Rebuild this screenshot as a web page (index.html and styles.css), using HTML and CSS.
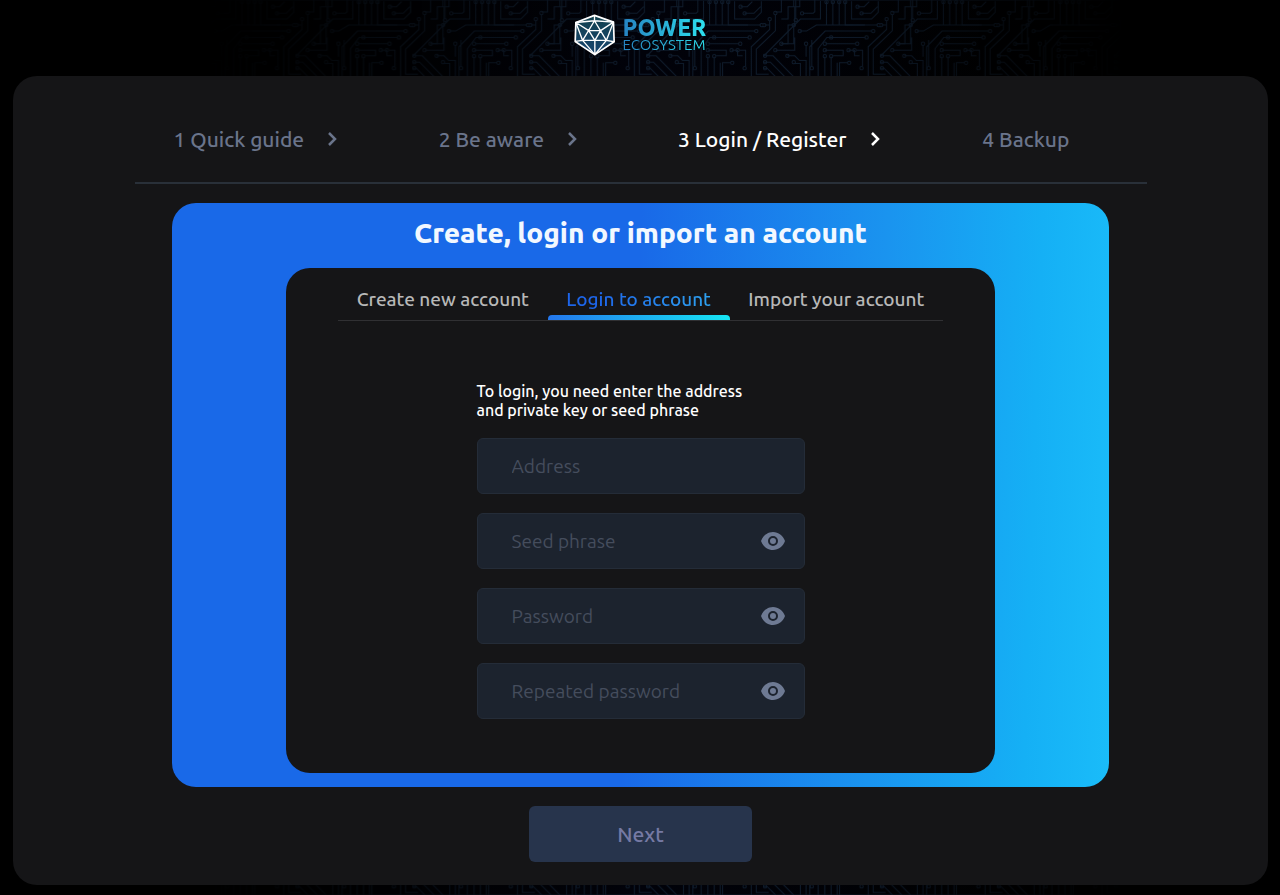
FILE: index.html
```html
<!DOCTYPE html>
<html lang="en">
<head>
<meta charset="utf-8">
<meta name="viewport" content="width=device-width, initial-scale=1">
<title>Power Ecosystem</title>
<link rel="stylesheet" href="styles.css">
</head>
<body>
<svg class="circuit" aria-hidden="true">
  <defs>
    <pattern id="tile" width="350" height="350" patternUnits="userSpaceOnUse" patternTransform="translate(763 0) scale(.334)">
      <g id="traces" fill="none" stroke-width="3">
        <path d="M5 75h15M98 57V0M120 40h30l5-5V0M172 2v55h-60L0 170M190 4v71M209 4v71M228 4v71M246 4v71h59M265 4v53h60l20-20V4M283 20h20l15-15M295 40h28l20-20"/>
        <path d="M110 93h20l30-18h184M140 230v-90l46-47h140M165 230v-84l26-34h115M188 131h90M185 150h55v17h-30M280 150h18v48M256 150h18v17h15M254 188h-25v42M0 167h30l62 63M0 186h22l44 44M0 204h12l26 26M38 150h57v-38M92 79v52h-37M129 135v35M146 200v-80M73 167h22l14 14h20v49M92 190h20v40M185 170v60M204 170v60M222 188v42"/>
        <path d="M20 62v26l-55 52v90M37 44v48l-57 55v75h37M55 131h20V75h20V20h15V0M37 36h18V0M55 57h20V20h17V0"/>
        <path d="M370 62v26l-55 52v90M387 44v48l-57 55v75h37M0 240h60l20 20h80l30-20h75l20 20h60M30 265h40l20 20v65M110 350v-55l30-30h90l20 20v65M170 340v-40h30v50M280 350v-60h40v-20M10 350v-45l20-20"/>
        <g>
          <circle cx="4" cy="75" r="5"/><circle cx="346" cy="75" r="5"/><circle cx="98" cy="60" r="5"/><circle cx="117" cy="40" r="5"/><circle cx="20" cy="57" r="5"/><circle cx="37" cy="39" r="5"/><circle cx="92" cy="75" r="5"/><circle cx="110" cy="93" r="5"/><circle cx="330" cy="93" r="5"/><circle cx="310" cy="112" r="5"/><circle cx="204" cy="112" r="5"/><circle cx="185" cy="131" r="5"/><circle cx="282" cy="131" r="5"/><circle cx="185" cy="150" r="5"/><circle cx="256" cy="150" r="5"/><circle cx="274" cy="150" r="5"/><circle cx="6" cy="167" r="5"/><circle cx="6" cy="186" r="5"/><circle cx="6" cy="204" r="5"/><circle cx="37" cy="150" r="5"/><circle cx="55" cy="131" r="5"/><circle cx="73" cy="167" r="5"/><circle cx="92" cy="186" r="5"/><circle cx="146" cy="204" r="5"/><circle cx="129" cy="131" r="5"/><circle cx="185" cy="168" r="5"/><circle cx="204" cy="168" r="5"/><circle cx="258" cy="188" r="5"/><circle cx="295" cy="204" r="5"/><circle cx="190" cy="6" r="5"/><circle cx="209" cy="6" r="5"/><circle cx="228" cy="6" r="5"/><circle cx="246" cy="6" r="5"/><circle cx="283" cy="20" r="5"/><circle cx="295" cy="40" r="5"/>
        </g>
      </g>
    </pattern>
  </defs>
  <rect width="100%" height="100%" fill="url(#tile)"/>
</svg>

<header class="header">
  <a class="logo" href="#">
    <svg class="logo-mark" viewBox="0 0 120 124" aria-hidden="true">
      <defs><linearGradient id="gem" x1="0" y1="0" x2="0" y2="1"><stop offset="0" stop-color="#12414e"/><stop offset="1" stop-color="#17456f"/></linearGradient></defs>
      <path d="M60 4 116 24 118 82 61 120 3 81 5 25Z" fill="url(#gem)"/>
      <g fill="none" stroke="#fff" stroke-linejoin="round">
        <path stroke-width="5" d="M60 4 116 24 118 82 61 120 3 81 5 25Z"/>
        <path stroke-width="4" d="M60 20 95 78H25ZM43 49H78L61 78ZM60 4V20M60 20 5 25 25 78 3 81M60 20 116 24 95 78 118 82M25 78 61 120 95 78M5 25 43 49M116 24 78 49M61 78V120"/>
      </g>
    </svg>
    <span class="logo-text"><strong>POWER</strong><span>ECOSYSTEM</span></span>
  </a>
</header>

<main class="panel">
  <nav class="steps" aria-label="Progress">
    <a href="#" class="step">1 Quick guide <svg class="chevron" viewBox="0 0 10 14"><path d="m2 1 6 6-6 6"/></svg></a>
    <a href="#" class="step">2 Be aware <svg class="chevron" viewBox="0 0 10 14"><path d="m2 1 6 6-6 6"/></svg></a>
    <a href="#" class="step current" aria-current="step">3 Login / Register <svg class="chevron" viewBox="0 0 10 14"><path d="m2 1 6 6-6 6"/></svg></a>
    <a href="#" class="step">4 Backup</a>
  </nav>

  <section class="card">
    <h1 class="title">Create, login or import an account</h1>
    <div class="card-body">
      <div class="tabs" role="tablist">
        <button class="tab" role="tab" type="button">Create new account</button>
        <button class="tab active" role="tab" type="button" aria-selected="true"><span>Login to account</span></button>
        <button class="tab" role="tab" type="button">Import your account</button>
      </div>
      <form class="form" id="login">
        <p class="hint">To login, you need enter the address<br>and private key or seed phrase</p>
        <div class="field"><input type="text" placeholder="Address" aria-label="Address"></div>
        <div class="field">
          <input type="password" placeholder="Seed phrase" aria-label="Seed phrase">
          <button class="eye" type="button" aria-label="Show seed phrase"><svg viewBox="0 0 24 18"><path fill-rule="evenodd" d="M12 0C6.500 0 2 3.700 0 9c2 5.300 6.500 9 12 9s10-3.700 12-9C22 3.700 17.500 0 12 0Zm0 4a5 5 0 1 1 0 10 5 5 0 0 1 0-10Zm0 2a3 3 0 1 0 0 6 3 3 0 0 0 0-6Z"/></svg></button>
        </div>
        <div class="field">
          <input type="password" placeholder="Password" aria-label="Password">
          <button class="eye" type="button" aria-label="Show password"><svg viewBox="0 0 24 18"><path fill-rule="evenodd" d="M12 0C6.500 0 2 3.700 0 9c2 5.300 6.500 9 12 9s10-3.700 12-9C22 3.700 17.500 0 12 0Zm0 4a5 5 0 1 1 0 10 5 5 0 0 1 0-10Zm0 2a3 3 0 1 0 0 6 3 3 0 0 0 0-6Z"/></svg></button>
        </div>
        <div class="field">
          <input type="password" placeholder="Repeated password" aria-label="Repeated password">
          <button class="eye" type="button" aria-label="Show repeated password"><svg viewBox="0 0 24 18"><path fill-rule="evenodd" d="M12 0C6.500 0 2 3.700 0 9c2 5.300 6.500 9 12 9s10-3.700 12-9C22 3.700 17.500 0 12 0Zm0 4a5 5 0 1 1 0 10 5 5 0 0 1 0-10Zm0 2a3 3 0 1 0 0 6 3 3 0 0 0 0-6Z"/></svg></button>
        </div>
      </form>
    </div>
  </section>
  <button class="next" type="submit" form="login" disabled>Next</button>
</main>
</body>
</html>
```
FILE: styles.css
```css
* { box-sizing: border-box; }

body {
  margin: 0;
  min-height: 100vh;
  padding-bottom: 10px;
  position: relative;
  background: #000;
  color: #fff;
  font-family: Ubuntu, "Noto Sans", sans-serif;
}

button, input { font: inherit; }
button { border: 0; padding: 0; background: none; color: inherit; }
a { color: inherit; text-decoration: none; }

.circuit {
  position: absolute;
  inset: 0;
  width: 100%;
  height: 100%;
  z-index: -1;
  stroke: #0e1b2b;
  background: linear-gradient(90deg, #000 15%, #01020a 50%, #000 85%);
  -webkit-mask-image: linear-gradient(90deg, transparent 16%, #000 50%, #000 65%, transparent 88%);
  mask-image: linear-gradient(90deg, transparent 16%, #000 50%, #000 65%, transparent 88%);
}

.header {
  display: flex;
  justify-content: center;
  height: 76px;
  padding-top: 14px;
}

.logo { display: flex; gap: 8px; height: 42px; }
.logo-mark { width: 41px; height: 42px; }
.logo-text {
  display: flex;
  flex-direction: column;
  padding-top: 4px;
  background: linear-gradient(90deg, #2683c2, #2de0ee);
  -webkit-background-clip: text;
  background-clip: text;
  color: transparent;
}
.logo-text strong { font-size: 23px; font-weight: 800; line-height: 20px; }
.logo-text span { font-size: 15px; line-height: 14px; }

.panel {
  display: flex;
  flex-direction: column;
  align-items: center;
  margin: 0 12px 0 13px;
  padding: 42px 24px 23px;
  border-radius: 24px;
  background: #151517;
}

.steps {
  display: grid;
  grid-template-columns: 265fr 239fr 304fr 126fr;
  width: 100%;
  max-width: 1012px;
  padding: 0 38px 22px 39px;
  border-bottom: 2px solid #293039;
  font-size: 21px;
  font-weight: 500;
  line-height: 42px;
  color: #6a748b;
}
.step { display: flex; align-items: center; gap: 23px; white-space: nowrap; }
.step.current { color: #fff; }
.chevron {
  width: 10px;
  height: 14px;
  fill: none;
  stroke: currentColor;
  stroke-width: 2.5;
}

.card {
  display: flex;
  flex-direction: column;
  align-items: center;
  width: 100%;
  max-width: 937px;
  margin: 19px 0;
  padding: 11px 24px 14px;
  border-radius: 24px;
  background: linear-gradient(92deg, #1969e8 49%, #1a94ef 75%, #15b0f5 91%, #1abcf9);
}
.title {
  margin: 0 0 16px;
  font-size: 28px;
  font-weight: 800;
  line-height: 38px;
  color: #f2f8ff;
}

.card-body {
  width: 100%;
  max-width: 709px;
  padding: 12px 52px 54px;
  border-radius: 24px;
  background: #151517;
}

.tabs {
  display: flex;
  justify-content: space-between;
  border-bottom: 1px solid #303033;
}
.tab {
  flex: 1 0 auto;
  height: 40px;
  padding-bottom: 2px;
  font-size: 19px;
  font-weight: 500;
  color: #b8b8b8;
}
.tab.active {
  display: flex;
  flex: 0 0 182px;
  flex-direction: column;
  align-items: center;
  padding: 0;
}
.tab.active span {
  padding-top: 3px;
  line-height: 32px;
  background: linear-gradient(90deg, #1d65ea 20%, #2ea1ef);
  -webkit-background-clip: text;
  background-clip: text;
  color: transparent;
}
.tab.active::after {
  content: "";
  flex: none;
  width: 100%;
  height: 5px;
  border-radius: 4px 4px 0 0;
  background: linear-gradient(90deg, #2477ed, #16e5f3);
}

.form {
  display: flex;
  flex-direction: column;
  gap: 19px;
  max-width: 328px;
  margin: 61px auto 0;
}
.hint {
  margin: 0 0 -1px;
  font-size: 16px;
  font-weight: 500;
  line-height: 19px;
  white-space: nowrap;
}
.field {
  display: flex;
  align-items: center;
  height: 56px;
  padding: 0 19px 0 34px;
  border: 1px solid #242c38;
  border-radius: 6px;
  background: #1c232e;
}
.field input {
  flex: 1;
  min-width: 0;
  padding: 0;
  border: 0;
  outline: 0;
  background: none;
  color: #fff;
  font-size: 19px;
}
.field input::placeholder { color: #454d5d; opacity: 1; }
.eye { display: flex; }
.eye svg { width: 24px; height: 18px; fill: #6e7a93; }

.next {
  width: 100%;
  max-width: 223px;
  height: 56px;
  border-radius: 6px;
  background: #27344c;
  color: #767aa4;
  font-size: 21px;
  font-weight: 500;
}
```
